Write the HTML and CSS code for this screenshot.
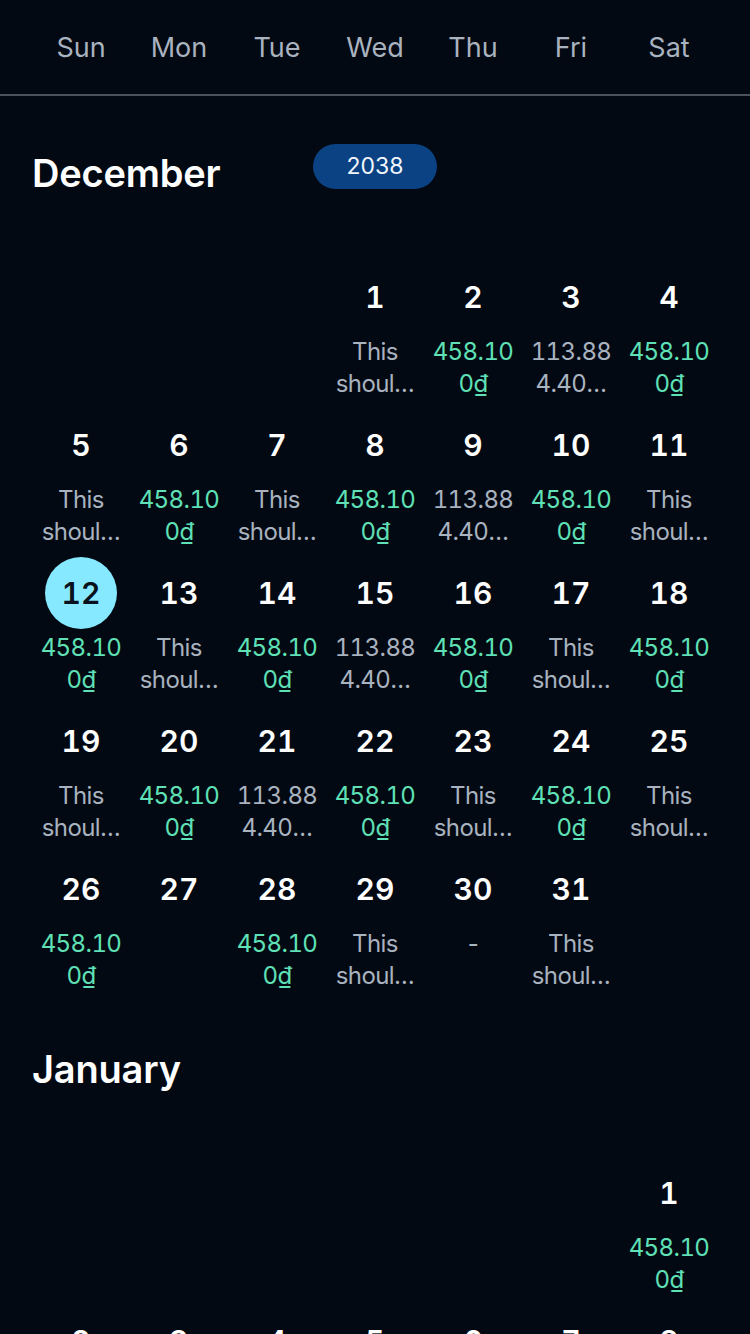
FILE: index.html
```html
<!DOCTYPE html>
<html lang="en">
<head>
<meta charset="utf-8">
<title>Calendar</title>
<link rel="stylesheet" href="styles.css">
</head>
<body>
<div class="page">
  <div class="weekdays">
    <div class="wd">Sun</div><div class="wd">Mon</div><div class="wd">Tue</div><div class="wd">Wed</div><div class="wd">Thu</div><div class="wd">Fri</div><div class="wd">Sat</div>
  </div>

  <section class="month">
    <div class="month-head">
      <h2 class="month-title">December</h2>
      <span class="year-pill">2038</span>
      <span></span>
    </div>
    <div class="grid">
      <div class="cell"></div><div class="cell"></div><div class="cell"></div>
      <div class="cell"><div class="num">1</div><div class="sub gray">This<br>shoul…</div></div>
      <div class="cell"><div class="num">2</div><div class="sub green">458.10<br>0₫</div></div>
      <div class="cell"><div class="num">3</div><div class="sub gray">113.88<br>4.40…</div></div>
      <div class="cell"><div class="num">4</div><div class="sub green">458.10<br>0₫</div></div>

      <div class="cell"><div class="num">5</div><div class="sub gray">This<br>shoul…</div></div>
      <div class="cell"><div class="num">6</div><div class="sub green">458.10<br>0₫</div></div>
      <div class="cell"><div class="num">7</div><div class="sub gray">This<br>shoul…</div></div>
      <div class="cell"><div class="num">8</div><div class="sub green">458.10<br>0₫</div></div>
      <div class="cell"><div class="num">9</div><div class="sub gray">113.88<br>4.40…</div></div>
      <div class="cell"><div class="num">10</div><div class="sub green">458.10<br>0₫</div></div>
      <div class="cell"><div class="num">11</div><div class="sub gray">This<br>shoul…</div></div>

      <div class="cell"><div class="num selected">12</div><div class="sub green">458.10<br>0₫</div></div>
      <div class="cell"><div class="num">13</div><div class="sub gray">This<br>shoul…</div></div>
      <div class="cell"><div class="num">14</div><div class="sub green">458.10<br>0₫</div></div>
      <div class="cell"><div class="num">15</div><div class="sub gray">113.88<br>4.40…</div></div>
      <div class="cell"><div class="num">16</div><div class="sub green">458.10<br>0₫</div></div>
      <div class="cell"><div class="num">17</div><div class="sub gray">This<br>shoul…</div></div>
      <div class="cell"><div class="num">18</div><div class="sub green">458.10<br>0₫</div></div>

      <div class="cell"><div class="num">19</div><div class="sub gray">This<br>shoul…</div></div>
      <div class="cell"><div class="num">20</div><div class="sub green">458.10<br>0₫</div></div>
      <div class="cell"><div class="num">21</div><div class="sub gray">113.88<br>4.40…</div></div>
      <div class="cell"><div class="num">22</div><div class="sub green">458.10<br>0₫</div></div>
      <div class="cell"><div class="num">23</div><div class="sub gray">This<br>shoul…</div></div>
      <div class="cell"><div class="num">24</div><div class="sub green">458.10<br>0₫</div></div>
      <div class="cell"><div class="num">25</div><div class="sub gray">This<br>shoul…</div></div>

      <div class="cell"><div class="num">26</div><div class="sub green">458.10<br>0₫</div></div>
      <div class="cell"><div class="num">27</div><div class="sub"></div></div>
      <div class="cell"><div class="num">28</div><div class="sub green">458.10<br>0₫</div></div>
      <div class="cell"><div class="num">29</div><div class="sub gray">This<br>shoul…</div></div>
      <div class="cell"><div class="num">30</div><div class="sub gray">-</div></div>
      <div class="cell"><div class="num">31</div><div class="sub gray">This<br>shoul…</div></div>
      <div class="cell"></div>
    </div>
  </section>

  <section class="month">
    <div class="month-head">
      <h2 class="month-title">January</h2>
      <span></span>
      <span></span>
    </div>
    <div class="grid">
      <div class="cell"></div><div class="cell"></div><div class="cell"></div><div class="cell"></div><div class="cell"></div><div class="cell"></div>
      <div class="cell"><div class="num">1</div><div class="sub green">458.10<br>0₫</div></div>

      <div class="cell"><div class="num">2</div><div class="sub gray">This<br>shoul…</div></div>
      <div class="cell"><div class="num">3</div><div class="sub green">458.10<br>0₫</div></div>
      <div class="cell"><div class="num">4</div><div class="sub gray">113.88<br>4.40…</div></div>
      <div class="cell"><div class="num">5</div><div class="sub green">458.10<br>0₫</div></div>
      <div class="cell"><div class="num">6</div><div class="sub gray">This<br>shoul…</div></div>
      <div class="cell"><div class="num">7</div><div class="sub green">458.10<br>0₫</div></div>
      <div class="cell"><div class="num">8</div><div class="sub gray">This<br>shoul…</div></div>
    </div>
  </section>
</div>
</body>
</html>
```

FILE: styles.css
```css
* { box-sizing: border-box; }

html, body {
  margin: 0;
  padding: 0;
  background: #020913;
}

body {
  font-family: Inter, "Noto Sans", "Liberation Sans", sans-serif;
  color: #ffffff;
}

.page {
  width: 750px;
}

.weekdays {
  display: grid;
  grid-template-columns: repeat(7, 98px);
  padding: 0 32px;
  height: 96px;
  border-bottom: 2px solid #4a525e;
}

.wd {
  text-align: center;
  font-size: 27px;
  color: #a9b2bf;
  line-height: 96px;
}

.month {
  padding: 48px 32px 0;
}

.month-head {
  display: grid;
  grid-template-columns: 1fr auto 1fr;
  align-items: start;
  margin-bottom: 66px;
}

.month-title {
  margin: 7px 0 0 0;
  font-size: 38px;
  line-height: 44px;
  font-weight: 600;
  color: #ffffff;
  letter-spacing: -0.2px;
}

.year-pill {
  display: block;
  width: 124px;
  height: 45px;
  border-radius: 23px;
  background: #0a4284;
  color: #f2f6fb;
  font-size: 23px;
  line-height: 45px;
  text-align: center;
}

.grid {
  display: grid;
  grid-template-columns: repeat(7, 98px);
  row-gap: 9px;
}

.cell {
  display: flex;
  flex-direction: column;
  align-items: center;
  height: 139px;
}

.num {
  width: 72px;
  height: 72px;
  border-radius: 50%;
  font-size: 30px;
  font-weight: 600;
  line-height: 72px;
  text-align: center;
  color: #ffffff;
  font-variant-numeric: tabular-nums;
}

.num.selected {
  background: #87e9ff;
  color: #08111c;
}

.sub {
  margin-top: 3px;
  font-size: 24px;
  line-height: 32px;
  text-align: center;
  white-space: nowrap;
  letter-spacing: -0.6px;
  font-variant-numeric: tabular-nums;
}

.sub.green { color: #5fe0b6; }
.sub.gray { color: #a9b2bf; }
```
